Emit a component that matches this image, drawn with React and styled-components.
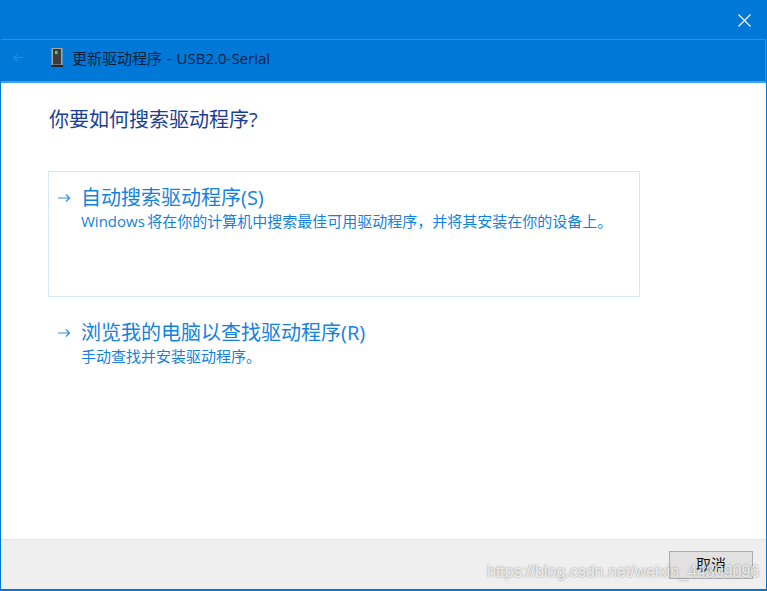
import React from "react"
import styled, { createGlobalStyle } from "styled-components"

const GlobalStyle = createGlobalStyle`
  html, body {
    margin: 0;
    padding: 0;
    background: #fff;
  }
  * {
    box-sizing: border-box;
  }
`

const FONT = `"Open Sans", "Noto Sans", "Noto Sans CJK SC", sans-serif`

const Window = styled.div`
  width: 767px;
  height: 591px;
  display: flex;
  flex-direction: column;
  border: solid #0078d7;
  border-width: 0 1px 2px 1px;
  background: #fff;
  font-family: ${FONT};
  overflow: hidden;
  position: relative;
`

const TitleBar = styled.div`
  height: 39px;
  flex: none;
  display: flex;
  justify-content: flex-end;
  align-items: center;
  background: #0078d7;
  padding: 0 15px 0 0;
`

const CloseButton = styled.div`
  width: 13px;
  height: 13px;
  display: flex;
  margin-top: 1px;
`

const HeaderBar = styled.div`
  height: 44px;
  flex: none;
  display: flex;
  align-items: center;
  background: #0078d7;
  border-top: 1px solid #2f8fe2;
  border-bottom: 2px solid #40a0f0;
  border-right: 1px solid #2f8fe2;
  padding: 0 0 6px 12px;
`

const BackArrow = styled.div`
  width: 10px;
  height: 9px;
  display: flex;
  margin-right: 28px;
`

const DeviceIcon = styled.div`
  width: 12px;
  height: 19px;
  display: flex;
  margin-right: 9px;
`

const HeaderTitle = styled.div`
  font-size: 15px;
  word-spacing: 1px;
  color: #0a1f3c;
  white-space: nowrap;
`

const Content = styled.div`
  flex: 1;
  display: flex;
  flex-direction: column;
  padding: 23px 0 0 47px;
`

const Heading = styled.div`
  font-size: 20px;
  line-height: 28px;
  color: #1a3e96;
  margin-bottom: 37px;
  padding-left: 1px;
`

const Choice = styled.div`
  width: 592px;
  height: ${(props) => props.$height}px;
  display: flex;
  padding: ${(props) => props.$top}px 0 0 8px;
  border: 1px solid ${(props) => (props.$active ? "#d3e8f8" : "transparent")};
`

const ChoiceArrow = styled.div`
  width: 24px;
  height: 10px;
  flex: none;
  display: flex;
  margin-top: 9px;
`

const ChoiceText = styled.div`
  display: flex;
  flex-direction: column;
  color: #1382de;
`

const ChoiceTitle = styled.div`
  font-size: 20px;
  line-height: 27px;
  white-space: nowrap;
`

const ChoiceDesc = styled.div`
  font-size: 15px;
  line-height: 20px;
  word-spacing: -1.5px;
  white-space: nowrap;
`

const Footer = styled.div`
  height: 50px;
  flex: none;
  display: flex;
  justify-content: flex-end;
  background: #efefef;
  border-top: 1px solid #e3e3e3;
  padding: 11px 13px 0 0;
`

const CancelButton = styled.div`
  width: 84px;
  height: 28px;
  display: flex;
  align-items: center;
  justify-content: center;
  background: #e1e1e1;
  border: 1px solid #adadad;
  padding-bottom: 3px;
  font-size: 15px;
  color: #111;
`

const Watermark = styled.div`
  position: absolute;
  left: 486px;
  top: 560px;
  font-family: "Liberation Sans", sans-serif;
  font-size: 16px;
  line-height: 24px;
  color: rgba(255, 255, 255, 0.8);
  text-shadow: 0 0 2px rgba(90, 90, 90, 0.75);
  white-space: nowrap;
`

const ArrowSvg = ({ color }) => (
  <svg width="15" height="10" viewBox="0 0 15 10" fill="none" stroke={color} strokeWidth="1.2">
    <path d="M1 5h12M9 1.5 12.5 5 9 8.5" />
  </svg>
)

const App = () => {
  return (
    <Window>
      <GlobalStyle />
      <TitleBar>
        <CloseButton>
          <svg width="13" height="13" viewBox="0 0 13 13" stroke="#fff" strokeWidth="1.1">
            <path d="M.5.5l12 12M12.5.5l-12 12" />
          </svg>
        </CloseButton>
      </TitleBar>
      <HeaderBar>
        <BackArrow>
          <svg width="10" height="9" viewBox="0 0 10 9" fill="none" stroke="#2c88d8" strokeWidth="1.1">
            <path d="M10 4.5H1M4.5 1 1 4.5 4.5 8" />
          </svg>
        </BackArrow>
        <DeviceIcon>
          <svg width="12" height="19" viewBox="0 0 12 19">
            <rect x="0.5" y="0" width="11" height="17" fill="#a5a5a5" />
            <rect x="2" y="1" width="8" height="15.5" fill="#3c3c3c" />
            <rect x="4" y="3" width="2.5" height="3" fill="#37e84a" />
            <rect x="0" y="17" width="12" height="2" fill="#20262c" />
          </svg>
        </DeviceIcon>
        <HeaderTitle>更新驱动程序 - USB2.0-Serial</HeaderTitle>
      </HeaderBar>
      <Content>
        <Heading>你要如何搜索驱动程序?</Heading>
        <Choice $active $height={126} $top={12}>
          <ChoiceArrow>
            <ArrowSvg color="#2f8fe0" />
          </ChoiceArrow>
          <ChoiceText>
            <ChoiceTitle>自动搜索驱动程序(S)</ChoiceTitle>
            <ChoiceDesc>Windows 将在你的计算机中搜索最佳可用驱动程序，并将其安装在你的设备上。</ChoiceDesc>
          </ChoiceText>
        </Choice>
        <Choice $height={100} $top={21}>
          <ChoiceArrow>
            <ArrowSvg color="#2f8fe0" />
          </ChoiceArrow>
          <ChoiceText>
            <ChoiceTitle>浏览我的电脑以查找驱动程序(R)</ChoiceTitle>
            <ChoiceDesc>手动查找并安装驱动程序。</ChoiceDesc>
          </ChoiceText>
        </Choice>
      </Content>
      <Footer>
        <CancelButton>取消</CancelButton>
      </Footer>
      <Watermark>https://blog.csdn.net/weixin_44809096</Watermark>
    </Window>
  )
}

export default App
